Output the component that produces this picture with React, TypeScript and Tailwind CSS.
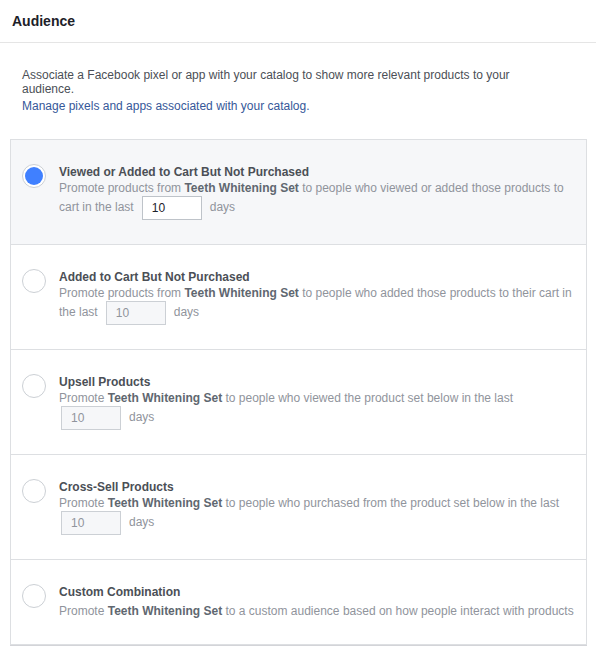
import React from "react";

function Radio({ checked }: { checked?: boolean }) {
  return (
    <span className="flex h-[24px] w-[24px] shrink-0 items-center justify-center rounded-full border border-[#ccd0d5] bg-white">
      {checked && <span className="h-[18px] w-[18px] rounded-full bg-[#4080ff]" />}
    </span>
  );
}

function DaysInput({ active }: { active?: boolean }) {
  return (
    <input
      readOnly
      disabled={!active}
      value="10"
      className={
        "inline-block h-[24px] w-[60px] border px-[9px] align-middle text-[12px] outline-none " +
        (active
          ? "border-[#bec3c9] bg-white text-[#1d2129]"
          : "border-[#ccd0d5] bg-[#f6f7f9] text-[#90949c]")
      }
    />
  );
}

const set = <b className="font-bold text-[#606770]">Teeth Whitening Set</b>;

function Row({
  title,
  selected,
  last,
  children,
}: {
  title: string;
  selected?: boolean;
  last?: boolean;
  children: React.ReactNode;
}) {
  return (
    <div
      className={
        "flex gap-[13px] pl-[11px] pr-[12px] pt-[24px] " +
        (last ? "pb-[25px] " : "border-b border-[#dddfe2] pb-[24px] ") +
        (selected ? "bg-[#f6f7f9]" : "bg-white")
      }
    >
      <Radio checked={selected} />
      <div className="flex-1 text-[12px] leading-[16px]">
        <div className="font-bold text-[#4b4f56]">{title}</div>
        <p className="text-[#90949c]">{children}</p>
      </div>
    </div>
  );
}

export default function App() {
  return (
    <div className="min-h-[660px] bg-white font-['Liberation_Sans',Arial,sans-serif]">
      <div className="h-[43px] border-b border-[#e5e5e5] pl-[12px] pt-[12px] text-[14px] font-bold leading-[18px] text-[#1d2129]">
        Audience
      </div>

      <div className="w-[542px] pl-[22px] pt-[25px] text-[12px] leading-[14px] text-[#4b4f56]">
        <p>Associate a Facebook pixel or app with your catalog to show more relevant products to your audience.</p>
        <a className="mt-[3px] block text-[#365899]" href="#">
          Manage pixels and apps associated with your catalog.
        </a>
      </div>

      <div className="ml-[10px] mr-[9px] mt-[26px] border border-[#dddfe2] shadow-[0_1px_0_#d3d4d8]">
        <Row selected title="Viewed or Added to Cart But Not Purchased">
          Promote products from {set} to people who viewed or added those products to cart in the last
          <span className="mx-[8px]">
            <DaysInput active />
          </span>
          days
        </Row>
        <Row title="Added to Cart But Not Purchased">
          Promote products from {set} to people who added those products to their cart in the last
          <span className="mx-[8px]">
            <DaysInput />
          </span>
          days
        </Row>
        <Row title="Upsell Products">
          Promote {set} to people who viewed the product set below in the last{" "}
          <span className="ml-[2px] mr-[8px]">
            <DaysInput />
          </span>
          days
        </Row>
        <Row title="Cross-Sell Products">
          Promote {set} to people who purchased from the product set below in the last{" "}
          <span className="ml-[2px] mr-[8px]">
            <DaysInput />
          </span>
          days
        </Row>
        <Row last title="Custom Combination">
          <span className="mt-[3px] block">
            Promote {set} to a custom audience based on how people interact with products
          </span>
        </Row>
      </div>
    </div>
  );
}
